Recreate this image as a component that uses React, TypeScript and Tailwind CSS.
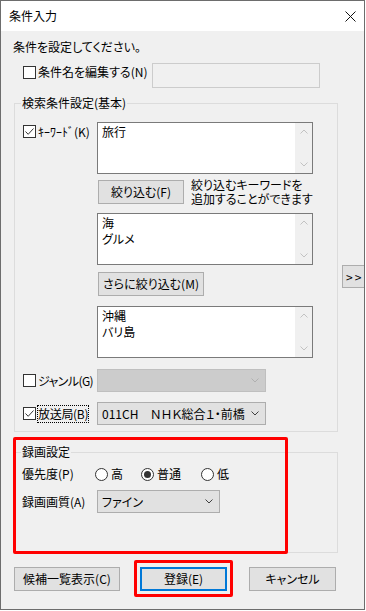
import type { ReactNode } from 'react'

const FONT = "font-['Noto_Sans_CJK_JP','Noto_Sans_CJK_SC',sans-serif]"

function Chevron({ up, color }: { up?: boolean; color: string }) {
  return (
    <svg width="8" height="5" viewBox="0 0 8 5" fill="none" aria-hidden="true">
      <path
        d={up ? 'M0.5 4.5 L4 1 L7.5 4.5' : 'M0.5 0.5 L4 4 L7.5 0.5'}
        stroke={color}
        strokeWidth="1"
      />
    </svg>
  )
}

function CheckBox({ checked }: { checked?: boolean }) {
  return (
    <span className="flex h-[13px] w-[13px] shrink-0 items-center justify-center border border-[#333333] bg-white">
      {checked && (
        <svg width="11" height="11" viewBox="0 0 11 11" fill="none" aria-hidden="true">
          <path d="M1.5 5.5 L4.2 8.3 L9.5 2.5" stroke="#333333" strokeWidth="1" />
        </svg>
      )}
    </span>
  )
}

function Radio({ checked }: { checked?: boolean }) {
  return (
    <span className="flex h-[13px] w-[13px] shrink-0 items-center justify-center rounded-full border border-[#333333] bg-white">
      {checked && <span className="h-[7px] w-[7px] rounded-full bg-[#333333]" />}
    </span>
  )
}

function Btn({ children, className = '' }: { children: ReactNode; className?: string }) {
  return (
    <button
      type="button"
      className={`flex h-[24px] shrink-0 items-center justify-center whitespace-nowrap border border-[#adadad] bg-[#e1e1e1] ${className}`}
    >
      {children}
    </button>
  )
}

/** Multi-line keyword box with the disabled scrollbar on the right. */
function ListBox({ lines, className = '' }: { lines: string[]; className?: string }) {
  return (
    <div className={`flex h-[52px] w-[216px] border border-[#7a7a7a] bg-white ${className}`}>
      <div className="flex-1 pl-[4px] pt-[1px]">
        {lines.map((l) => (
          <div key={l}>{l}</div>
        ))}
      </div>
      <div className="flex w-[17px] flex-col justify-between bg-[#f0f0f0]">
        <div className="flex h-[17px] items-center justify-center">
          <Chevron up color="#c2c2c2" />
        </div>
        <div className="flex h-[17px] items-center justify-center">
          <Chevron color="#c2c2c2" />
        </div>
      </div>
    </div>
  )
}

function Combo({
  text,
  disabled,
  className = '',
}: {
  text?: string
  disabled?: boolean
  className?: string
}) {
  return (
    <div
      className={`flex h-[23px] shrink-0 items-center border pl-[4px] pr-[6px] ${
        disabled ? 'border-[#bfbfbf] bg-[#cccccc]' : 'border-[#adadad] bg-[#e1e1e1]'
      } ${className}`}
    >
      <span className="min-w-0 flex-1 overflow-hidden whitespace-nowrap">{text}</span>
      <span className="ml-[2px] flex">
        <Chevron color={disabled ? '#b0b0b0' : '#404040'} />
      </span>
    </div>
  )
}

export default function App() {
  return (
    <div
      className={`h-[611px] w-[366px] bg-white text-[12px] leading-[16px] text-black ${FONT} [font-feature-settings:'palt']`}
    >
      <div className="relative flex h-[610px] w-[365px] flex-col overflow-hidden border border-[#6d6d6d] bg-[#f0f0f0]">
        {/* Title bar */}
        <div className="flex h-[30px] shrink-0 items-center justify-between bg-white px-[8px]">
          <span>条件入力</span>
          <svg width="11" height="11" viewBox="0 0 11 11" fill="none" aria-hidden="true">
            <path d="M0.5 0.5 L10.5 10.5 M10.5 0.5 L0.5 10.5" stroke="#111111" strokeWidth="1" />
          </svg>
        </div>

        <div className="flex flex-col pl-[12px] pt-[8px]">
          <p>条件を設定してください。</p>

          <div className="mt-[8px] flex h-[25px] items-start">
            <div className="ml-[10px] mt-[1px] flex h-[16px] w-[129px] shrink-0 items-center gap-[2px] whitespace-nowrap">
              <CheckBox />
              <span>条件名を編集する(N)</span>
            </div>
            <div className="h-[25px] w-[168px] shrink-0 border border-[#cccccc] bg-[#f0f0f0]" />
          </div>

          {/* 検索条件設定(基本) */}
          <div className="mt-[7px] flex">
            <fieldset className="ml-[1px] w-[324px] shrink-0 border border-[#dcdcdc] pb-[6px] pl-[8px] pt-[11px]">
              <legend className="-ml-[2px] px-[1px]">検索条件設定(基本)</legend>

              <div className="flex">
                <div className="flex h-[19px] w-[74px] shrink-0 items-center gap-[2px] whitespace-nowrap">
                  <CheckBox checked />
                  <span>ｷｰﾜｰﾄﾞ(K)</span>
                </div>
                <div className="flex flex-col">
                  <ListBox lines={['旅行']} />
                  <div className="mt-[6px] flex h-[25px] items-start">
                    <Btn className="ml-[1px] w-[86px]">絞り込む(F)</Btn>
                    <p className="-mt-[2px] ml-[7px] whitespace-nowrap leading-[14px]">
                      絞り込むキーワードを
                      <br />
                      追加することができます
                    </p>
                  </div>
                  <ListBox className="mt-[8px]" lines={['海', 'グルメ']} />
                  <Btn className="ml-[1px] mt-[7px] w-[106px]">さらに絞り込む(M)</Btn>
                  <ListBox className="mt-[10px]" lines={['沖縄', 'バリ島']} />
                </div>
              </div>

              <div className="mt-[11px] flex items-center">
                <div className="flex w-[74px] shrink-0 items-center gap-[2px] whitespace-nowrap tracking-[-0.6px]">
                  <CheckBox />
                  <span>ジャンル(G)</span>
                </div>
                <Combo disabled className="w-[169px]" />
              </div>

              <div className="mt-[10px] flex items-center">
                <div className="flex w-[74px] shrink-0 items-center gap-[1px] whitespace-nowrap tracking-[-0.3px]">
                  <CheckBox checked />
                  <span className="border border-dotted border-black">放送局(B)</span>
                </div>
                <Combo className="w-[169px]" text="011CH　ＮＨＫ総合１・前橋" />
              </div>
            </fieldset>

            <div className="ml-[4px] shrink-0 pt-[170px]">
              <button
                type="button"
                className="flex h-[23px] w-[26px] items-center border border-[#adadad] bg-[#e1e1e1] pl-[3px] tracking-[2px]"
              >
                &gt;&gt;
              </button>
            </div>
          </div>

          {/* 録画設定 */}
          <fieldset className="ml-[1px] mt-[12px] w-[324px] border border-[#dcdcdc] pb-[39px] pl-[7px] pt-[5px]">
            <legend className="-ml-[1px] px-[1px]">録画設定</legend>
            <div className="flex h-[18px] items-center whitespace-nowrap">
              <span className="w-[73px] shrink-0">優先度(P)</span>
              <label className="flex w-[46px] items-center gap-[3px]">
                <Radio />
                <span>高</span>
              </label>
              <label className="flex w-[60px] items-center gap-[3px]">
                <Radio checked />
                <span>普通</span>
              </label>
              <label className="flex items-center gap-[3px]">
                <Radio />
                <span>低</span>
              </label>
            </div>
            <div className="mt-[7px] flex items-center whitespace-nowrap">
              <span className="w-[75px] shrink-0">録画画質(A)</span>
              <Combo className="w-[123px]" text="ファイン" />
            </div>
          </fieldset>

          {/* Dialog buttons */}
          <div className="mt-[14px] flex">
            <Btn className="ml-[1px] w-[106px]">候補一覧表示(C)</Btn>
            <button
              type="button"
              className="ml-[20px] flex h-[24px] w-[87px] shrink-0 items-center justify-center border-2 border-[#0078d7] bg-[#e1e1e1]"
            >
              登録(E)
            </button>
            <Btn className="ml-[22px] w-[87px]">キャンセル</Btn>
          </div>
        </div>

        {/* Red annotation frames drawn over the dialog */}
        <div className="pointer-events-none absolute left-[12px] top-[436px] h-[117px] w-[275px] rounded-[2px] border-[3px] border-[#ff0000]" />
        <div className="pointer-events-none absolute left-[133px] top-[559px] h-[37px] w-[99px] rounded-[2px] border-[3px] border-[#ff0000]" />
      </div>
    </div>
  )
}
